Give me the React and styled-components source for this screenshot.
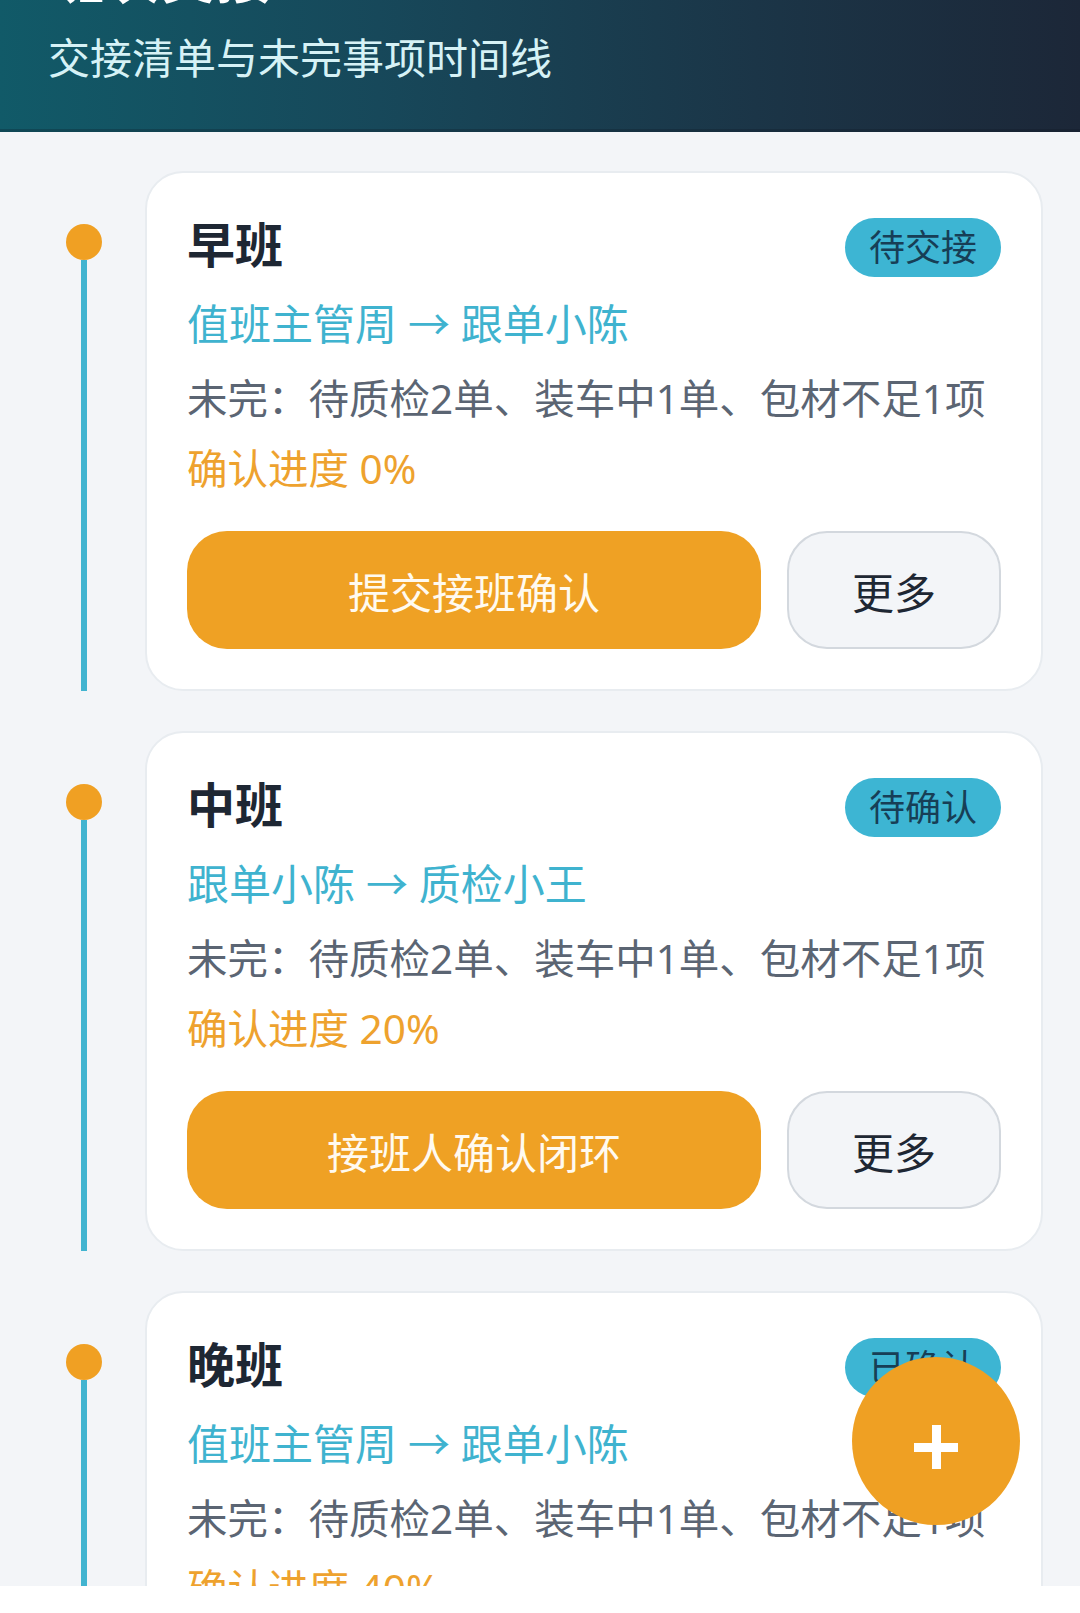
import React, { useLayoutEffect, useRef } from 'react'
import styled, { createGlobalStyle } from 'styled-components'

const GlobalStyle = createGlobalStyle`
    * { box-sizing: border-box; }
    body {
        margin: 0;
        background: #ffffff;
        font-family: "Noto Sans", "Noto Sans CJK SC", sans-serif;
    }
`

const Frame = styled.div`
    position: relative;
    width: 1080px;
    height: 1586px;
    overflow: hidden;
    background: #f3f5f8;
`
const Scroller = styled.div`
    height: 100%;
    overflow-y: auto;
    scrollbar-width: none;
    &::-webkit-scrollbar { display: none; }
`
const Header = styled.header`
    padding: 48px 48px 46px;
    background: linear-gradient(90deg, #115a68 0%, #17485a 35%, #1b3547 70%, #1c2738 100%);
    box-shadow: inset 0 -3px 0 rgba(10, 20, 30, 0.25);
`
const PageTitle = styled.h1`
    margin: 0;
    font-size: 56px;
    line-height: 72px;
    font-weight: 700;
    color: #ffffff;
`
const Subtitle = styled.p`
    margin: 18px 0 0;
    font-size: 42px;
    line-height: 56px;
    color: #d6f2f6;
`
const List = styled.div`
    display: flex;
    flex-direction: column;
    gap: 40px;
    padding: 39px 37px 60px 48px;
`
const Item = styled.div`
    display: grid;
    grid-template-columns: 72px 1fr;
    column-gap: 25px;
`
const Rail = styled.div`
    display: flex;
    flex-direction: column;
    align-items: center;
    padding-top: 53px;
`
const Dot = styled.div`
    width: 36px;
    height: 36px;
    border-radius: 50%;
    background: #f0a023;
    flex-shrink: 0;
`
const Line = styled.div`
    flex: 1;
    width: 6px;
    background: #42b4d0;
`
const Card = styled.div`
    background: #ffffff;
    border: 2px solid #e8ecf0;
    border-radius: 38px;
    padding: 40px 40px 40px;
`
const CardHead = styled.div`
    display: flex;
    align-items: center;
    justify-content: space-between;
    height: 64px;
`
const ShiftName = styled.h2`
    margin: 0;
    font-size: 48px;
    line-height: 64px;
    font-weight: 700;
    color: #1e2733;
`
const Badge = styled.span`
    height: 59px;
    margin-top: 5px;
    padding: 0 24px;
    border-radius: 30px;
    background: #3db5d3;
    color: #173e56;
    font-size: 36px;
    line-height: 59px;
`
const Route = styled.div`
    margin-top: 18px;
    font-size: 42px;
    line-height: 58px;
    color: #3fb3cf;
`
const Pending = styled.div`
    margin-top: 18px;
    font-size: 40.5px;
    line-height: 56px;
    color: #5b6573;
`
const Progress = styled.div`
    margin-top: 14px;
    font-size: 40.5px;
    line-height: 56px;
    color: #eea22e;
`
const Actions = styled.div`
    display: flex;
    gap: 26px;
    margin-top: 34px;
`
const Button = styled.button`
    height: 118px;
    border-radius: 40px;
    font-family: inherit;
    font-size: 42px;
    cursor: pointer;
    flex: ${(p) => (p.primary ? 1 : '0 0 214px')};
    border: ${(p) => (p.primary ? 'none' : '2px solid #d3d8de')};
    background: ${(p) => (p.primary ? '#efa124' : '#f3f5f8')};
    color: ${(p) => (p.primary ? '#fffaf0' : '#1e2733')};
`
const Fab = styled.button`
    position: absolute;
    right: 60px;
    bottom: 61px;
    width: 168px;
    height: 168px;
    border: none;
    border-radius: 50%;
    background: #efa023;
    display: flex;
    align-items: center;
    justify-content: center;
    padding: 12px 0 0;
    cursor: pointer;
`

const shifts = [
    { name: '早班', status: '待交接', route: '值班主管周 → 跟单小陈', progress: 0, action: '提交接班确认' },
    { name: '中班', status: '待确认', route: '跟单小陈 → 质检小王', progress: 20, action: '接班人确认闭环' },
    { name: '晚班', status: '已确认', route: '值班主管周 → 跟单小陈', progress: 40, action: '查看交接记录' },
]

const pending = '未完：待质检2单、装车中1单、包材不足1项'

const App = () => {
    const scroller = useRef(null)

    useLayoutEffect(() => {
        if (scroller.current) scroller.current.scrollTop = 108
    }, [])

    return (
        <>
            <GlobalStyle />
            <Frame>
                <Scroller ref={scroller}>
                    <Header>
                        <PageTitle>班次交接</PageTitle>
                        <Subtitle>交接清单与未完事项时间线</Subtitle>
                    </Header>
                    <List>
                        {shifts.map((s) => (
                            <Item key={s.name}>
                                <Rail>
                                    <Dot />
                                    <Line />
                                </Rail>
                                <Card>
                                    <CardHead>
                                        <ShiftName>{s.name}</ShiftName>
                                        <Badge>{s.status}</Badge>
                                    </CardHead>
                                    <Route>{s.route}</Route>
                                    <Pending>{pending}</Pending>
                                    <Progress>确认进度 {s.progress}%</Progress>
                                    <Actions>
                                        <Button primary>{s.action}</Button>
                                        <Button>更多</Button>
                                    </Actions>
                                </Card>
                            </Item>
                        ))}
                    </List>
                </Scroller>
                <Fab aria-label="新增">
                    <svg width="44" height="44" viewBox="0 0 44 44">
                        <rect x="0" y="18" width="44" height="9" fill="#ffffff" />
                        <rect x="18" y="0" width="9" height="44" fill="#ffffff" />
                    </svg>
                </Fab>
            </Frame>
        </>
    )
}

export default App
